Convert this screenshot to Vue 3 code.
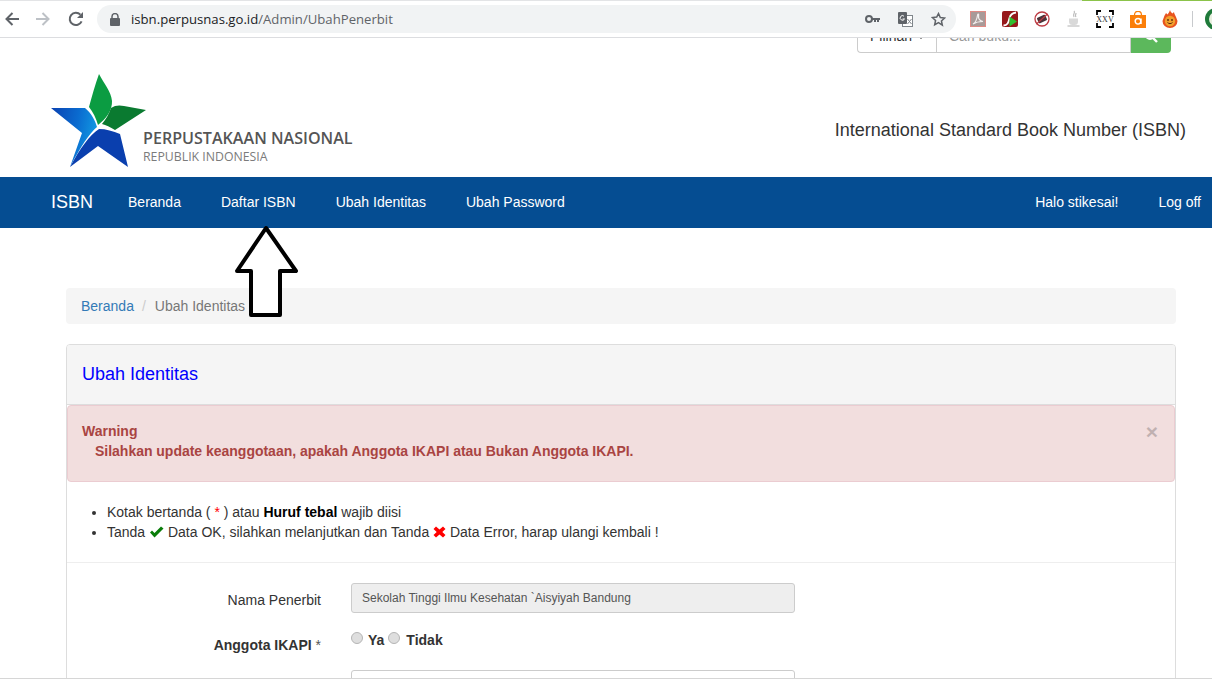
<script setup>
const navLeft = ['Beranda', 'Daftar ISBN', 'Ubah Identitas', 'Ubah Password']
const navRight = ['Halo stikesai!', 'Log off']
</script>

<template>
  <div class="screen">
    <header class="chrome">
      <div class="progress"></div>
      <button class="nav-btn first" aria-label="Back">
        <svg width="16" height="16" viewBox="0 0 16 16"><path d="M15 8H2.500M8.500 2 2.500 8l6 6" fill="none" stroke="#5f6368" stroke-width="2"/></svg>
      </button>
      <button class="nav-btn second" aria-label="Forward">
        <svg width="16" height="16" viewBox="0 0 16 16"><path d="M1 8h12.500M7.500 2l6 6-6 6" fill="none" stroke="#bdc1c6" stroke-width="2"/></svg>
      </button>
      <button class="nav-btn third" aria-label="Reload">
        <svg width="16" height="16" viewBox="0 0 16 16"><path d="M13.600 10.400A6.200 6.200 0 1 1 12.400 3.600" fill="none" stroke="#5f6368" stroke-width="2"/><path d="M15 1v6H9z" fill="#5f6368"/></svg>
      </button>
      <div class="omnibox">
        <svg class="lock" width="10" height="13" viewBox="0 0 10 13"><path d="M2 5.500V3.600a3 3 0 0 1 6 0v1.900" fill="none" stroke="#5f6368" stroke-width="1.500"/><rect y="5" width="10" height="8" rx="1" fill="#5f6368"/></svg>
        <span class="url"><span class="host">isbn.perpusnas.go.id</span>/Admin/UbahPenerbit</span>
        <span class="omni-icons">
          <svg width="15" height="8" viewBox="0 0 15 8"><circle cx="4" cy="4" r="3" fill="none" stroke="#5f6368" stroke-width="2"/><path d="M7 3h8v2h-1v2h-2V5h-1v2H9V5H7z" fill="#5f6368"/></svg>
          <svg width="15" height="15" viewBox="0 0 15 15"><rect x="4.500" y="3.500" width="10" height="11" fill="#fff" stroke="#80868b"/><rect width="9" height="12" rx="1" fill="#5f6368"/><path d="M6 4.200A2.300 2.300 0 1 0 6.500 7H4.600" fill="none" stroke="#fff"/><path d="m9.500 7 4 5M13.500 7l-4 5" stroke="#80868b"/></svg>
          <svg width="15" height="15" viewBox="0 0 24 24"><path d="m12 2.500 2.900 6.300 6.900.8-5.100 4.700 1.400 6.800L12 16.900l-6.100 3.500 1.400-6.800-5.100-4.700 6.900-.8z" fill="none" stroke="#5f6368" stroke-width="2.400"/></svg>
        </span>
      </div>
      <div class="extensions">
        <svg width="16" height="16" viewBox="0 0 16 16"><rect x=".5" y=".5" width="15" height="15" fill="#a89a98" stroke="#e08a84"/><path d="M3 13c2-1 4-5 4.600-9 .2-1.500 1.400-1 1 .5C8 8 10 10 13 10.500c-3 0-7 .5-10 2.500z" fill="none" stroke="#f3efee" stroke-width="1.200"/></svg>
        <svg width="16" height="16" viewBox="0 0 16 16"><rect width="16" height="16" rx="2" fill="#96191b"/><path d="M1.500 14.500c4 0 5-3 6-7.500.6-2.500 2-5 6.500-5.500" fill="none" stroke="#fff" stroke-width="1.800"/><path d="m7.500 5.500 7.500 5-7.500 5z" fill="#2fbf2f"/></svg>
        <svg width="16" height="16" viewBox="0 0 16 16"><circle cx="8" cy="8" r="7" fill="#fff" stroke="#bd3a42" stroke-width="1.300"/><rect x="3.500" y="5" width="9" height="6" rx="1" fill="#4a3338" transform="rotate(-25 8 8)"/><path d="M2.500 13 13.500 3" stroke="#bd3a42" stroke-width="1.200"/></svg>
        <svg width="16" height="18" viewBox="0 0 16 18"><path d="M8 1c2 2-2 3 0 6M10 3c0 2-1.500 2 0 4" fill="none" stroke="#bbb" stroke-width="1.200"/><path d="M3 8.500h9v3a3.500 3.500 0 0 1-3.500 3.500h-2A3.500 3.500 0 0 1 3 11.500z" fill="#d9d9d9"/><path d="M1.500 16h12" stroke="#c7c7c7" stroke-width="1.400"/></svg>
        <svg class="xxv" width="18" height="18" viewBox="0 0 18 18"><path d="M1 5V1h4M13 1h4v4M17 13v4h-4M5 17H1v-4" fill="none" stroke="#000" stroke-width="1.800"/><text x="9" y="12" text-anchor="middle" font-family="Liberation Serif" font-size="8" fill="#333">XXV</text></svg>
        <svg width="16" height="17" viewBox="0 0 16 17"><path d="M0 4h16v13H0z" fill="#fb7f0a"/><path d="M4.500 4c0-5 7-5 7 0" fill="none" stroke="#fb7f0a" stroke-width="1.300"/><path d="M11 7.500V13M10.800 10.300a2.800 2.800 0 1 1-5.600 0 2.800 2.800 0 0 1 5.600 0z" fill="none" stroke="#fff" stroke-width="1.500"/></svg>
        <svg width="16" height="18" viewBox="0 0 16 18"><path d="M8 0c.5 2 1.500 2.500 2.500 3.500L12 2c.2 2 1 2.500 2 5L15.500 11A7.500 7 0 0 1 .5 11L2 7c.6-2 1.400-2.500 2-4l1.500 1.500C6.500 3 7.500 2 8 0z" fill="#e8541f"/><circle cx="8" cy="11" r="5.200" fill="#f2a02c"/><circle cx="6" cy="10" r=".9" fill="#5b2a10"/><circle cx="10" cy="10" r=".9" fill="#5b2a10"/><path d="M5.500 12.500c1.500 1.500 3.500 1.500 5 0" fill="none" stroke="#5b2a10"/></svg>
        <i class="sep"></i>
        <svg class="avatar" width="24" height="24" viewBox="0 0 24 24"><circle cx="12" cy="12" r="11" fill="#1f7a3a"/><circle cx="12" cy="12" r="7" fill="#e9f0e0"/><circle cx="12" cy="12" r="3.500" fill="#1f7a3a"/></svg>
      </div>
    </header>

    <div class="page">
      <div class="search-row">
        <form class="search">
          <span class="picker">Pilihan <i class="caret"></i></span>
          <input class="q" placeholder="Cari buku..." />
          <button class="go" type="button" aria-label="Cari">
            <svg width="14" height="14" viewBox="0 0 14 14"><circle cx="6" cy="6" r="4" fill="none" stroke="#fff" stroke-width="2"/><path d="m9 9 4 4" stroke="#fff" stroke-width="2.400"/></svg>
          </button>
        </form>
      </div>

      <div class="brand-row">
        <div class="logo">
          <svg class="star" width="95" height="94" viewBox="0 0 95 94">
            <defs>
              <linearGradient id="left-blue" x1="0" y1=".2" x2="1" y2=".45">
                <stop offset="0" stop-color="#0a45b4"/>
                <stop offset=".55" stop-color="#0a6cd0"/>
                <stop offset="1" stop-color="#129be3"/>
              </linearGradient>
            </defs>
            <path d="M48 0C53 10 60 17 61 27 61.500 36 55 45 47 51 45 44 42 38 38 33 41 22 44 11 48 0z" fill="#0b9c42"/>
            <path d="M60 34C64 31 69 31 73 32L95 36 64 56C59 53 55 51 51 50 55 45 58 40 60 34z" fill="#0a7a30"/>
            <path d="M0 34H34C40 39 44 46 46 53 38 60 30 72 19 93L31 59z" fill="url(#left-blue)"/>
            <path d="M48 55C55 55 62 57 69 60L77 93 47 72 19 93C30 73 38 62 48 55z" fill="#0a3fae"/>
          </svg>
          <div class="logo-text">
            <strong>PERPUSTAKAAN NASIONAL</strong>
            <span>REPUBLIK INDONESIA</span>
          </div>
        </div>
        <div class="site-title">International Standard Book Number (ISBN)</div>
      </div>

      <nav class="navbar">
        <a class="nav-brand">ISBN</a>
        <a v-for="item in navLeft" :key="item" class="nav-link">{{ item }}</a>
        <span class="nav-space"></span>
        <a v-for="item in navRight" :key="item" class="nav-link">{{ item }}</a>
      </nav>

      <main class="content">
        <div class="breadcrumb">
          <a>Beranda</a><span class="slash">/</span><span class="active">Ubah Identitas</span>
        </div>

        <section class="panel">
          <div class="panel-heading">Ubah Identitas</div>
          <div class="alert">
            <span class="close">×</span>
            <div>Warning</div>
            <div class="alert-msg">Silahkan update keanggotaan, apakah Anggota IKAPI atau Bukan Anggota IKAPI.</div>
          </div>
          <ul class="notes">
            <li>Kotak bertanda ( <span class="red">*</span> ) atau <b>Huruf tebal</b> wajib diisi</li>
            <li>
              Tanda
              <svg class="mark" width="15" height="12" viewBox="0 0 15 12"><path d="M1 6.500 3 4.500l2.500 2.500L12 .5l2.500 2-9 9z" fill="#0a7d0a"/></svg>
              Data OK, silahkan melanjutkan dan Tanda
              <svg class="mark" width="13" height="12" viewBox="0 0 13 12"><path d="M3 .5 6.500 3.500 10 .5l2.500 2.500L9.300 6l3.200 3L10 11.500 6.500 8.500 3 11.500.5 9l3.200-3L.5 3z" fill="#f00"/></svg>
              Data Error, harap ulangi kembali !
            </li>
          </ul>
          <div class="form">
            <div class="form-row name-row">
              <label>Nama Penerbit</label>
              <input class="field" disabled value="Sekolah Tinggi Ilmu Kesehatan `Aisyiyah Bandung" />
            </div>
            <div class="form-row ikapi-row">
              <label class="bold">Anggota IKAPI <span class="star-mark">*</span></label>
              <div class="radios">
                <input type="radio" name="ikapi" /><b>Ya</b>
                <input type="radio" name="ikapi" /><b>Tidak</b>
              </div>
            </div>
            <div class="form-row">
              <label></label>
              <input class="field blank" />
            </div>
          </div>
        </section>
      </main>

      <svg class="pointer" width="66" height="94" viewBox="0 0 66 94">
        <path d="M31 3 61 46H45V90H16V46H2z" fill="#fff" stroke="#000" stroke-width="4" stroke-linejoin="round"/>
      </svg>
    </div>
    <div class="bottom-gap"></div>
  </div>
</template>

<style>
html, body { margin: 0; background: #fff; overflow: hidden; }
</style>

<style scoped>
.screen {
  width: 1212px;
  height: 686px;
  overflow: hidden;
  display: flex;
  flex-direction: column;
  background: #fff;
  font-family: "Liberation Sans", Arial, sans-serif;
  font-size: 14px;
  line-height: 20px;
  color: #333;
}

.chrome {
  position: relative;
  height: 36px;
  flex: none;
  display: flex;
  align-items: center;
  border-top: 1px solid #e3e4e6;
  border-bottom: 1px solid #dcdde0;
  box-sizing: content-box;
}
.progress {
  position: absolute;
  top: -1px;
  right: 0;
  width: 130px;
  height: 1px;
  background: #8bc34a;
}
.nav-btn {
  padding: 0;
  border: 0;
  background: none;
  display: flex;
  width: 16px;
  height: 16px;
}
.first { margin-left: 4px; }
.second { margin-left: 15px; }
.third { margin-left: 17px; }
.omnibox {
  margin-left: 13px;
  width: 859px;
  height: 28px;
  border-radius: 14px;
  background: #f1f3f4;
  display: flex;
  align-items: center;
  box-sizing: border-box;
  padding-left: 13px;
}
.lock { flex: none; }
.url {
  margin-left: 11px;
  font-family: "Open Sans", sans-serif;
  font-size: 13.150px;
  color: #5f6368;
}
.host { color: #202124; }
.omni-icons {
  margin-left: auto;
  display: flex;
  align-items: center;
  gap: 18px;
  padding-right: 10px;
}
.extensions {
  margin-left: 14px;
  flex: 1;
  display: flex;
  align-items: center;
  gap: 16px;
  min-width: 0;
}
.extensions svg { flex: none; }
.xxv { margin-left: -2px; }
.sep {
  width: 1px;
  height: 16px;
  background: #c8cacd;
  margin-left: -2px;
  flex: none;
}
.avatar { margin-left: -5px; }

.page {
  position: relative;
  height: 640px;
  flex: none;
  overflow: hidden;
  border-bottom: 1px solid #d6d6d6;
}
.bottom-gap { flex: 1; }

.search-row {
  height: 15px;
  display: flex;
  justify-content: flex-end;
  align-items: flex-end;
  padding-right: 41px;
  overflow: hidden;
}
.search {
  flex: none;
  display: flex;
  width: 314px;
  height: 34px;
  margin: 0;
}
.picker {
  box-sizing: border-box;
  width: 79px;
  height: 34px;
  line-height: 32px;
  padding-left: 12px;
  color: #333;
  background: #fff;
  border: 1px solid #ccc;
  border-right: 0;
  border-radius: 0 0 0 4px;
}
.caret {
  display: inline-block;
  vertical-align: middle;
  margin-left: 2px;
  border-top: 3px solid #333;
  border-left: 3px solid transparent;
  border-right: 3px solid transparent;
}
.q {
  box-sizing: border-box;
  width: 195px;
  height: 34px;
  padding: 6px 12px;
  border: 1px solid #ccc;
  font: 14px "Liberation Sans", sans-serif;
  outline: 0;
}
.q::placeholder { color: #999; opacity: 1; }
.go {
  width: 40px;
  height: 34px;
  padding: 0;
  border: 0;
  background: #5cb85c;
  border-radius: 0 0 4px 0;
  display: flex;
  align-items: center;
  justify-content: center;
}

.brand-row {
  height: 124px;
  display: flex;
  padding: 21px 26px 0 51px;
  box-sizing: border-box;
}
.logo {
  position: relative;
  display: flex;
  align-items: flex-end;
  height: 94px;
}
.star { flex: none; }
.logo-text {
  display: flex;
  flex-direction: column;
  margin-left: -3px;
  padding-bottom: 2px;
  font-family: "Open Sans", sans-serif;
}
.logo-text strong {
  font-size: 16.100px;
  line-height: 20px;
  font-weight: 600;
  color: #555;
  white-space: nowrap;
}
.logo-text span {
  font-size: 12.300px;
  line-height: 18px;
  color: #7b7b7b;
  white-space: nowrap;
}
.site-title {
  margin-left: auto;
  padding-top: 46px;
  font-size: 18px;
  color: #333;
}

.navbar {
  height: 51px;
  background: #054d92;
  display: flex;
  align-items: center;
  padding: 0 0 2px 31px;
  box-sizing: border-box;
  color: #fff;
}
.navbar a {
  padding: 0 20px;
  line-height: 20px;
  white-space: nowrap;
}
.navbar .nav-brand { font-size: 18px; padding-right: 15px; }
.navbar a:last-child { padding-right: 11px; }
.nav-space { flex: 1; }

.content {
  padding: 60px 36px 0 66px;
}
.breadcrumb {
  height: 36px;
  box-sizing: border-box;
  padding: 8px 15px;
  background: #f5f5f5;
  border-radius: 4px;
  margin-bottom: 20px;
}
.breadcrumb a { color: #337ab7; }
.slash { color: #ccc; padding: 0 9px 0 8px; }
.active { color: #777; }

.panel {
  border: 1px solid #ddd;
  border-radius: 4px;
}
.panel-heading {
  height: 60px;
  box-sizing: border-box;
  border-bottom: 1px solid #ddd;
  background: #f5f5f5;
  border-radius: 3px 3px 0 0;
  padding: 19px 15px 0;
  font-size: 18px;
  color: #00f;
}
.alert {
  position: relative;
  height: 77px;
  box-sizing: border-box;
  padding: 15px 14px 0;
  background: #f2dede;
  border: 1px solid #ebccd1;
  border-radius: 4px;
  color: #a94442;
  font-weight: bold;
}
.alert-msg { padding-left: 13px; letter-spacing: -0.015px; }
.close {
  position: absolute;
  top: 15px;
  right: 16px;
  font-size: 21px;
  line-height: 21px;
  color: #000;
  opacity: 0.2;
}
.notes {
  margin: 0;
  height: 81px;
  box-sizing: border-box;
  padding: 20px 0 0 40px;
  border-bottom: 1px solid #eee;
  list-style: disc;
}
.notes b { color: #000; }
.red { color: #f00; }
.mark { vertical-align: -1px; }

.form {
  padding-top: 20px;
}
.form-row {
  display: flex;
  align-items: flex-start;
}
.form-row label {
  width: 254px;
  flex: none;
  text-align: right;
  padding-top: 7px;
}
.name-row { height: 50px; }
.ikapi-row { height: 37px; }
.ikapi-row label { padding-top: 2px; }
.bold { font-weight: bold; }
.star-mark { font-weight: normal; color: #555; }
.field {
  box-sizing: border-box;
  margin-left: 30px;
  width: 444px;
  height: 30px;
  padding: 5px 10px;
  border: 1px solid #ccc;
  border-radius: 3px;
  background: #eee;
  color: #555;
  font: 12px "Liberation Sans", sans-serif;
  opacity: 1;
}
.blank { background: #fff; }
.radios {
  margin-left: 30px;
  margin-top: -3px;
  display: flex;
  align-items: center;
  height: 20px;
}
.radios input {
  appearance: none;
  box-sizing: border-box;
  width: 12px;
  height: 12px;
  margin: 0 5px 4px 0;
  border: 1px solid #b5b5b5;
  border-radius: 50%;
  background: #dedede;
}
.radios b { margin-right: 4px; }
.radios input + b + input + b { margin-left: 1px; }

.pointer {
  position: absolute;
  left: 235px;
  top: 187px;
}
</style>
